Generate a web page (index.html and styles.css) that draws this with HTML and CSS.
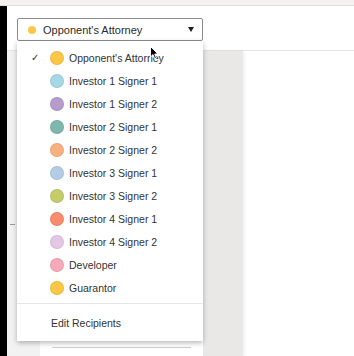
FILE: index.html
```html
<!DOCTYPE html>
<html>
<head>
<title>Recipients</title>
<link rel="stylesheet" href="styles.css">
<meta charset="utf-8">
</head>
<body>

<div class="topbar"></div>

<div class="app">

<div class="rail"></div>

<div class="main">

<div class="header">
<div class="select">
<span class="dot yellow"></span>
<span class="select-label">Opponent's Attorney</span>
<span class="caret"></span>
</div>
</div>

<div class="content">
<div class="pane"><div class="tick"></div></div>
<div class="doc"><div class="rule"></div></div>
<div class="column"></div>
<div class="blank"></div>
</div>

<!-- open dropdown -->
<div class="menu">
<ul class="options">
<li><span class="check">&#10003;</span><span class="swatch yellow"></span>Opponent's Attorney</li>
<li><span class="check"></span><span class="swatch sky"></span>Investor 1 Signer 1</li>
<li><span class="check"></span><span class="swatch purple"></span>Investor 1 Signer 2</li>
<li><span class="check"></span><span class="swatch teal"></span>Investor 2 Signer 1</li>
<li><span class="check"></span><span class="swatch orange"></span>Investor 2 Signer 2</li>
<li><span class="check"></span><span class="swatch steel"></span>Investor 3 Signer 1</li>
<li><span class="check"></span><span class="swatch olive"></span>Investor 3 Signer 2</li>
<li><span class="check"></span><span class="swatch coral"></span>Investor 4 Signer 1</li>
<li><span class="check"></span><span class="swatch lilac"></span>Investor 4 Signer 2</li>
<li><span class="check"></span><span class="swatch pink"></span>Developer</li>
<li><span class="check"></span><span class="swatch yellow"></span>Guarantor</li>
</ul>
<div class="menu-footer">Edit Recipients</div>
</div>

<svg class="cursor" width="9" height="14" viewBox="0 0 9 14">
<path d="M0.5 0.5 L0.5 11 L3 8.6 L4.8 12.8 L6.4 12.1 L4.7 8 L8 8 Z" fill="#000" stroke="#fff" stroke-width="1"/>
</svg>

</div>

</div>

</body>
</html>
```

FILE: styles.css
```css
*
{
padding:0;
margin:0;
box-sizing:border-box;
}

body
{
width:354px;
height:356px;
overflow:hidden;
font-family:"Liberation Sans",Arial,sans-serif;
color:#333;
background-color:#fff;
}

.topbar
{
height:6px;
background-color:#f3f2f1;
border-bottom:1px solid #dedddc;
}

.app
{
display:flex;
height:350px;
}

.rail
{
width:7px;
background-color:#000;
}

.main
{
flex:1;
position:relative;
display:flex;
flex-direction:column;
}

.header
{
height:45px;
padding:12px 0px 0px 10px;
border-bottom:1px solid #e4e4e4;
}

.select
{
display:flex;
align-items:center;
width:186px;
height:23px;
padding:0px 8px 0px 10px;
border:1px solid #8c8c8c;
border-radius:2px;
font-size:11px;
color:#2b2b2b;
}

.dot
{
width:8px;
height:8px;
border-radius:50%;
margin-right:7px;
}

.select-label
{
flex:1;
}

.caret
{
width:0;
height:0;
border-left:3.5px solid transparent;
border-right:3.5px solid transparent;
border-top:5px solid #1e1e1e;
}

.content
{
flex:1;
display:flex;
}

.pane
{
width:33px;
background-color:#f2f2f2;
padding:173px 0px 0px 3px;
}

.tick
{
width:5px;
height:1px;
background-color:#9a9a9a;
}

.doc
{
width:163px;
display:flex;
flex-direction:column;
justify-content:flex-end;
padding:0px 12px 8px 12px;
}

.rule
{
height:1px;
background-color:#cfcfcf;
}

.column
{
width:40px;
background-color:#e9e8e7;
box-shadow:2px 0px 3px rgba(0,0,0,0.06);
}

.blank
{
flex:1;
}

/* dropdown menu */
.menu
{
position:absolute;
left:10px;
top:35px;
width:186px;
height:300px;
background-color:#fff;
box-shadow:0px 2px 5px rgba(0,0,0,0.28);
}

.options
{
list-style:none;
padding:5px 0px 4px 0px;
border-bottom:1px solid #e6e6e6;
}

.options li
{
display:flex;
align-items:center;
height:23px;
padding-left:13px;
font-size:10.5px;
color:#333;
}

.check
{
width:20px;
padding-left:1px;
font-family:"DejaVu Sans",sans-serif;
font-size:10px;
color:#333;
}

.swatch
{
width:14px;
height:14px;
border-radius:50%;
margin-right:5px;
border:1px solid rgba(0,0,0,0.07);
}

.menu-footer
{
height:38px;
display:flex;
align-items:center;
padding-left:34px;
padding-bottom:1px;
font-size:10.5px;
color:#333;
}

.yellow{background-color:#fcc745;}
.sky{background-color:#a6d7e4;}
.purple{background-color:#b69ccb;}
.teal{background-color:#7db8ad;}
.orange{background-color:#f9b07f;}
.steel{background-color:#b3cde5;}
.olive{background-color:#c5cc6b;}
.coral{background-color:#f98c6d;}
.lilac{background-color:#e4c7e4;}
.pink{background-color:#f6a9b9;}

.cursor
{
position:absolute;
left:143px;
top:40px;
}
```
